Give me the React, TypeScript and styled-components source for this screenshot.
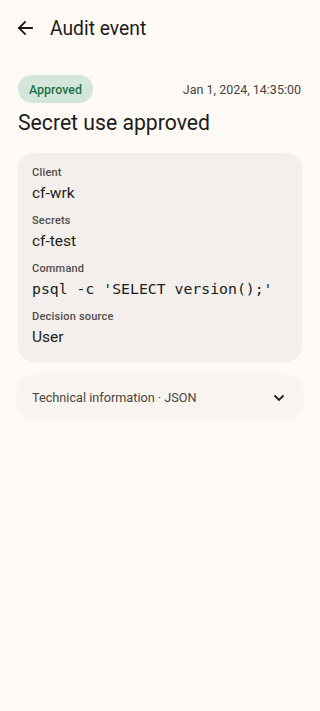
import React from "react";
import styled, { createGlobalStyle } from "styled-components";

const Global = createGlobalStyle`
  html, body { margin: 0; padding: 0; background: #fdf9f5; }
  body { font-family: Roboto, "Noto Sans", sans-serif; color: #1d1b1a; }
  * { box-sizing: border-box; }
`;

const Page = styled.div`
  width: 320px;
  min-height: 711px;
  background: #fdf9f5;
  display: flex;
  flex-direction: column;
`;

const TopBar = styled.header`
  height: 56px;
  display: flex;
  align-items: center;
  padding: 0 16px;
  gap: 16px;
`;

const IconButton = styled.button`
  width: 18px;
  height: 24px;
  padding: 0;
  border: none;
  background: transparent;
  display: flex;
  align-items: center;
  justify-content: center;
  color: #1d1b1a;
`;

const Title = styled.h1`
  margin: 0;
  font-size: 19.3px;
  font-weight: 400;
  color: #1d1b1a;
`;

const Content = styled.main`
  padding: 19px 18px 0;
  display: flex;
  flex-direction: column;
`;

const MetaRow = styled.div`
  display: flex;
  align-items: center;
  justify-content: space-between;
`;

const Chip = styled.span`
  height: 28px;
  padding: 0 11px;
  border-radius: 14px;
  background: #d4e5dc;
  color: #1b7345;
  font-size: 12.4px;
  font-weight: 500;
  display: inline-flex;
  align-items: center;
`;

const DateText = styled.span`
  font-size: 12.5px;
  color: #48443f;
  padding-right: 1px;
`;

const Heading = styled.h2`
  margin: 5px 0 0;
  font-size: 21.2px;
  font-weight: 400;
  line-height: 30px;
  color: #1d1b1a;
`;

const DetailCard = styled.section`
  margin-top: 15px;
  background: #f2efec;
  border-radius: 16px;
  padding: 12px 14px 13px;
  display: flex;
  flex-direction: column;
  gap: 8px;
`;

const Field = styled.div`
  display: flex;
  flex-direction: column;
`;

const Label = styled.span`
  font-size: 11px;
  font-weight: 500;
  color: #524d4a;
  line-height: 16px;
  letter-spacing: 0.2px;
`;

const Value = styled.span<{ $mono?: boolean }>`
  font-size: ${(p) => (p.$mono ? "14.8px" : "15.5px")};
  line-height: 24px;
  color: #1d1b1a;
  font-family: ${(p) =>
    p.$mono ? '"DejaVu Sans Mono", "Liberation Mono", monospace' : "inherit"};
`;

const ExpandRow = styled.button`
  margin-top: 15px;
  height: 41px;
  width: 100%;
  border: none;
  border-radius: 16px;
  background: #f8f4f0;
  box-shadow: 0 0 6px rgba(200, 180, 170, 0.12);
  padding: 0 17px 0 14px;
  display: flex;
  align-items: center;
  justify-content: space-between;
  font-family: inherit;
  font-size: 12.7px;
  color: #4a4542;
`;

const fields: { label: string; value: string; mono?: boolean }[] = [
  { label: "Client", value: "cf-wrk" },
  { label: "Secrets", value: "cf-test" },
  { label: "Command", value: "psql -c 'SELECT version();'", mono: true },
  { label: "Decision source", value: "User" },
];

export default function App() {
  return (
    <Page>
      <Global />
      <TopBar>
        <IconButton aria-label="Back">
          <svg width="16" height="16" viewBox="0 0 16 16" fill="none">
            <path
              d="M15 8H2M8 2L2 8l6 6"
              stroke="#1d1b1a"
              strokeWidth="1.8"
              strokeLinecap="square"
            />
          </svg>
        </IconButton>
        <Title>Audit event</Title>
      </TopBar>
      <Content>
        <MetaRow>
          <Chip>Approved</Chip>
          <DateText>Jan 1, 2024, 14:35:00</DateText>
        </MetaRow>
        <Heading>Secret use approved</Heading>
        <DetailCard>
          {fields.map((f) => (
            <Field key={f.label}>
              <Label>{f.label}</Label>
              <Value $mono={f.mono}>{f.value}</Value>
            </Field>
          ))}
        </DetailCard>
        <ExpandRow>
          <span>Technical information · JSON</span>
          <svg width="12" height="8" viewBox="0 0 12 8" fill="none">
            <path
              d="M1.5 1.5L6 6l4.5-4.5"
              stroke="#1d1b1a"
              strokeWidth="1.8"
            />
          </svg>
        </ExpandRow>
      </Content>
    </Page>
  );
}
